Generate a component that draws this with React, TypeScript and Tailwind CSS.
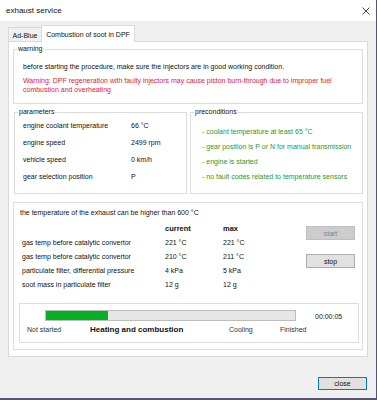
import React from "react";

const params = [
  ["engine coolant temperature", "66 °C"],
  ["engine speed", "2499 rpm"],
  ["vehicle speed", "0 km/h"],
  ["gear selection position", "P"],
];

const preconditions = [
  "- coolant temperature at least 65 °C",
  "- gear position is P or N for manual transmission",
  "- engine is started",
  "- no fault codes related to temperature sensors",
];

const readings = [
  ["gas temp before catalytic convertor", "221 °C", "221 °C"],
  ["gas temp before catalytic convertor", "210 °C", "211 °C"],
  ["particulate filter, differential pressure", "4 kPa", "5 kPa"],
  ["soot mass in particulate filter", "12 g", "12 g"],
];

function GroupBox({
  title,
  className = "",
  children,
}: {
  title: string;
  className?: string;
  children: React.ReactNode;
}) {
  return (
    <fieldset className={`min-w-0 border border-[#dcdcdc] ${className}`}>
      <legend className="ml-[3px] px-[1px] leading-[8px]">{title}</legend>
      {children}
    </fieldset>
  );
}

export default function App() {
  return (
    <div className="w-[377px] h-[400px] bg-[#57527a] font-['Liberation_Sans','DejaVu_Sans',sans-serif] text-[7px] leading-[9px] text-[#111]">
      <div className="w-[376px] h-[398px] bg-[#f0f0f0] flex flex-col">
        {/* title bar */}
        <div className="h-[21px] bg-white flex items-center justify-between pl-[6px] pr-[6px]">
          <span className="text-[8px]">exhaust service</span>
          <svg width="8" height="8" viewBox="0 0 8 8" className="stroke-[#333]">
            <path d="M0.5 0.5 L7.5 7.5 M7.5 0.5 L0.5 7.5" strokeWidth="0.9" />
          </svg>
        </div>

        <div className="px-[8px] pt-[4px]">
          {/* tabs */}
          <div className="flex items-end h-[17px]">
            <div className="w-[33px] h-[15px] border-l border-t border-[#d9d9d9] flex items-center justify-center">
              Ad-Blue
            </div>
            <div className="relative z-10 w-[94px] h-[17px] bg-white border-l border-t border-r border-[#d9d9d9] flex items-center justify-center">
              Combustion of soot in DPF
            </div>
          </div>

          {/* tab page */}
          <div className="-mt-[1px] w-[360px] h-[316px] bg-white border border-[#d9d9d9] px-[4px] pt-[3px]">
            <GroupBox title="warning">
              <div className="pt-[9px] pl-[9px] pb-[9px]">
                <p>before starting the procedure, make sure the injectors are in good working condition.</p>
                <p className="mt-[5px] text-[#e0173f]">
                  Warning: DPF regeneration with faulty injectors may cause piston burn-through due to improper fuel
                  <br />
                  combustion and overheating
                </p>
              </div>
            </GroupBox>

            <div className="mt-[4px] flex gap-[3px] pl-[1px]">
              <GroupBox title="parameters" className="w-[173px] shrink-0">
                <div className="pt-[5px] pl-[8px] pb-[12px] flex flex-col gap-[8px]">
                  {params.map(([label, value]) => (
                    <div key={label} className="flex">
                      <span className="w-[108px]">{label}</span>
                      <span>{value}</span>
                    </div>
                  ))}
                </div>
              </GroupBox>
              <GroupBox title="preconditions" className="flex-1">
                <div className="pt-[11px] pl-[11px] flex flex-col gap-[6px] text-[#1f9a2a]">
                  {preconditions.map((p) => (
                    <span key={p}>{p}</span>
                  ))}
                </div>
              </GroupBox>
            </div>

            {/* regeneration */}
            <div className="mt-[8px] border border-[#dcdcdc] pt-[5px] pl-[5px] pr-[7px] pb-[6px]">
              <p className="pl-[1px]">the temperature of the exhaust can be higher than 600 °C</p>
              <div className="mt-[4px] flex">
                <div className="flex-1 pl-[3px] grid grid-cols-[143px_58px_1fr]">
                  <span className="h-[14px]" />
                  <span className="h-[14px] flex items-center font-bold text-[7.5px]">current</span>
                  <span className="h-[14px] flex items-center font-bold text-[7.5px]">max</span>
                  {readings.map(([label, cur, max], i) => (
                    <React.Fragment key={i}>
                      <span className="h-[14px] flex items-center">{label}</span>
                      <span className="h-[14px] flex items-center">{cur}</span>
                      <span className="h-[14px] flex items-center">{max}</span>
                    </React.Fragment>
                  ))}
                </div>
                <div className="w-[49px] pt-[5px] flex flex-col gap-[14px]">
                  <button className="h-[14px] bg-[#cccccc] border border-[#bfbfbf] text-[#838383]">start</button>
                  <button className="h-[14px] bg-[#e1e1e1] border border-[#adadad]">stop</button>
                </div>
              </div>

              {/* progress */}
              <div className="mt-[12px] w-[340px] border border-[#dcdcdc] pt-[6px] pb-[8px]">
                <div className="flex items-center">
                  <div className="ml-[25px] w-[251px] h-[11px] bg-[#e6e6e6] border border-[#bcbcbc]">
                    <div className="w-[62px] h-full bg-[#06b025]" />
                  </div>
                  <span className="ml-[19px] mt-[2px]">00:00:05</span>
                </div>
                <div className="mt-[4px] pl-[7px] flex items-center h-[9px]">
                  <span className="w-[63px] text-[#333]">Not started</span>
                  <span className="w-[139px] font-bold text-[8px]">Heating and combustion</span>
                  <span className="w-[51px] text-[#333]">Cooling</span>
                  <span className="text-[#333]">Finished</span>
                </div>
              </div>
            </div>
          </div>

          <div className="mt-[20px] flex justify-end pr-[1px]">
            <button className="w-[49px] h-[13px] bg-[#e1e1e1] border border-[#0078d7] leading-[9px]">close</button>
          </div>
        </div>
      </div>
    </div>
  );
}
